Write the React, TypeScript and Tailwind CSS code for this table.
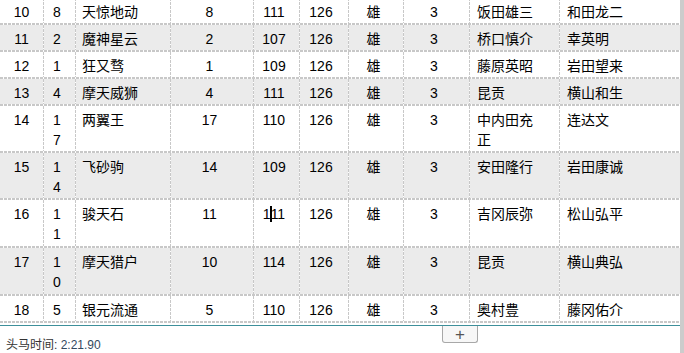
import React from 'react';

type Row = string[];

const rows: Row[] = [
  ['10', '8', '天惊地动', '8', '111', '126', '雄', '3', '饭田雄三', '和田龙二'],
  ['11', '2', '魔神星云', '2', '107', '126', '雄', '3', '桥口慎介', '幸英明'],
  ['12', '1', '狂又骛', '1', '109', '126', '雄', '3', '藤原英昭', '岩田望来'],
  ['13', '4', '摩天威狮', '4', '111', '126', '雄', '3', '昆贡', '横山和生'],
  ['14', '17', '两翼王', '17', '110', '126', '雄', '3', '中内田充正', '连达文'],
  ['15', '14', '飞砂驹', '14', '109', '126', '雄', '3', '安田隆行', '岩田康诚'],
  ['16', '11', '骏天石', '11', '111', '126', '雄', '3', '吉冈辰弥', '松山弘平'],
  ['17', '10', '摩天猎户', '10', '114', '126', '雄', '3', '昆贡', '横山典弘'],
  ['18', '5', '银元流通', '5', '110', '126', '雄', '3', '奥村豊', '藤冈佑介'],
];

// column boxes: width + alignment/padding
const cols = [
  'w-[43px] text-center',
  'w-[32px] text-center pl-[8px] pr-[12px] break-all',
  'w-[95px] text-left pl-[7px]',
  'w-[83px] text-center pr-[4px]',
  'w-[46px] text-center pr-[4px]',
  'w-[49px] text-center pr-[5px]',
  'w-[55px] text-center pr-[4px]',
  'w-[66px] text-center pr-[4px]',
  'w-[90px] text-left pl-[8px] pr-[14px]',
  'w-[121px] text-left pl-[8px]',
];

const whiteCell =
  '[background:repeating-linear-gradient(180deg,#c8c8c8_0_3px,#ffffff_3px_4px)_left_top/1px_100%_no-repeat,#ffffff]';
const grayCell =
  '[background:repeating-linear-gradient(180deg,#c8c8c8_0_3px,#ffffff_3px_4px)_left_top/1px_100%_no-repeat,#ebebeb]';

function Cell({ value, col, gray, tall, caret }: { value: string; col: number; gray: boolean; tall: boolean; caret?: boolean }) {
  const bg = col === 0 ? (gray ? 'bg-[#ebebeb]' : 'bg-white') : gray ? grayCell : whiteCell;
  return (
    <div className={`${cols[col]} ${bg} ${tall ? 'pb-[2px]' : 'pb-[1px]'} shrink-0 pt-[4px] leading-[20px]`}>
      {caret ? (
        <>
          1<span className="inline-block w-[2px] h-[16px] -mx-[1px] bg-black align-[-3px]" />
          11
        </>
      ) : (
        value
      )}
    </div>
  );
}

export default function App() {
  return (
    <div
      className="w-[684px] h-[353px] flex bg-white overflow-hidden text-[14px] text-black"
      style={{ fontFamily: '"Liberation Sans", "Noto Sans CJK SC", sans-serif' }}
    >
      <div className="w-[680px] flex flex-col">
        <div className="h-[325px] overflow-hidden">
          <div className="-mt-[2px]">
            {rows.map((row, i) => (
              <div
                key={row[0]}
                className="flex pb-[2px] [background:repeating-linear-gradient(90deg,#c8c8c8_0_3px,#ffffff_3px_4px)_left_bottom/100%_2px_no-repeat,#ffffff]"
              >
                {row.map((v, c) => (
                  <Cell
                    key={c}
                    value={v}
                    col={c}
                    gray={i % 2 === 1}
                    tall={row[0] === '16' || row[0] === '17'}
                    caret={row[0] === '16' && c === 4}
                  />
                ))}
              </div>
            ))}
          </div>
        </div>
        <div className="h-[1px] bg-[#3d8f9a]" />
        <div className="grid h-[27px]">
          <div className="col-start-1 row-start-1 self-end pl-[6px] text-[12px] leading-[16px] text-[#333333]">
            头马时间: <span className="text-[#34495e]">2:21.90</span>
          </div>
          <div className="col-start-1 row-start-1 self-start ml-[442px] w-[36px] h-[17px] border border-t-0 border-[#a8a8a8] rounded-b-[3px] bg-[#f7f7f7] flex items-center justify-center text-[17px] font-light leading-none text-[#555555]">
            +
          </div>
        </div>
      </div>
      <div className="w-[4px] bg-[#cccccc]" />
    </div>
  );
}
